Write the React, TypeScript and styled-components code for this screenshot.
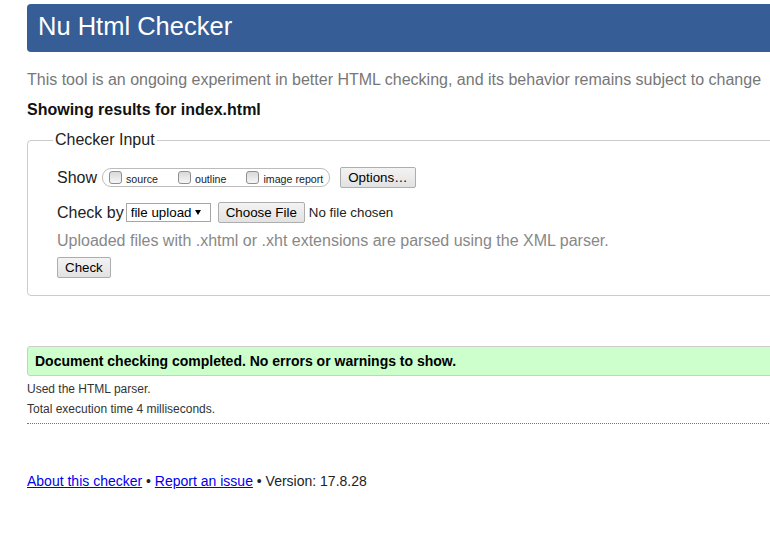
import React from "react";
import styled, { createGlobalStyle } from "styled-components";

const GlobalStyle = createGlobalStyle`
  html, body {
    margin: 0;
    padding: 0;
    overflow: hidden;
    background: #fff;
  }
  body {
    font-family: "Liberation Sans", Arial, sans-serif;
    color: #222;
  }
`;

const Page = styled.div`
  width: 820px;
  padding: 4px 0 0 27px;
`;

const Header = styled.h1`
  margin: 0;
  height: 48px;
  box-sizing: border-box;
  display: flex;
  align-items: center;
  padding: 0 0 2px 11px;
  background: #365d95;
  border-radius: 4px;
  color: #fff;
  font-size: 25.5px;
  font-weight: normal;
  line-height: 1;
`;

const Intro = styled.p`
  margin: 18px 0 0;
  font-size: 16px;
  line-height: 20px;
  color: #777;
`;

const ResultsFor = styled.p`
  margin: 10px 0 0;
  font-size: 16px;
  line-height: 20px;
  font-weight: bold;
  color: #111;
`;

const Fieldset = styled.fieldset`
  margin: 11px 0 0;
  padding: 0 29px 17px;
  border: 1px solid #ccc;
  border-radius: 4px;
  min-width: 0;
`;

const Legend = styled.legend`
  margin-left: -4px;
  padding: 0 2px;
  font-size: 16px;
  color: #222;
`;

const Row = styled.div<{ $mt: number }>`
  display: flex;
  align-items: center;
  height: 21px;
  margin-top: ${(p) => p.$mt}px;
  font-size: 16px;
`;

const RowLabel = styled.span<{ $gap: number }>`
  margin-right: ${(p) => p.$gap}px;
  color: #222;
`;

const ShowGroup = styled.span`
  display: inline-flex;
  align-items: center;
  gap: 20px;
  height: 19px;
  box-sizing: border-box;
  padding: 0 6px;
  border: 1px solid #bcbcbc;
  border-radius: 9px;
`;

const CheckLabel = styled.label`
  display: inline-flex;
  align-items: center;
  gap: 4px;
  font-size: 10.67px;
  color: #222;
`;

const CheckText = styled.span`
  position: relative;
  top: 1px;
`;

const Box = styled.input.attrs({ type: "checkbox" })`
  appearance: none;
  margin: 0;
  width: 13px;
  height: 13px;
  box-sizing: border-box;
  border: 1px solid #8f8f8f;
  border-radius: 3px;
  background: linear-gradient(#d9d9d9, #f6f6f6);
`;

const Button = styled.button<{ $ml?: number }>`
  margin-left: ${(p) => p.$ml ?? 0}px;
  height: 21px;
  padding: 0 7px;
  box-sizing: border-box;
  border: 1px solid #adadad;
  border-radius: 2px;
  background: linear-gradient(#f3f3f3, #e2e2e2);
  font-family: "Liberation Sans", Arial, sans-serif;
  font-size: 13.333px;
  color: #000;
  line-height: 1;
`;

const SelectWrap = styled.span`
  position: relative;
  display: inline-flex;
`;

const Select = styled.select`
  appearance: none;
  width: 85px;
  height: 19px;
  box-sizing: border-box;
  border: 1px solid #a6a6a6;
  border-radius: 0;
  background: #fff;
  padding: 0 0 0 4px;
  font-family: "Liberation Sans", Arial, sans-serif;
  font-size: 13.333px;
  color: #000;
`;

const Arrow = styled.span`
  position: absolute;
  right: 10px;
  top: 7px;
  width: 0;
  height: 0;
  border-left: 3px solid transparent;
  border-right: 3px solid transparent;
  border-top: 5px solid #000;
  pointer-events: none;
`;

const FileStatus = styled.span`
  margin-left: 4px;
  font-size: 13.333px;
  color: #222;
`;

const Help = styled.p`
  margin: 8px 0 0;
  font-size: 16px;
  line-height: 20px;
  color: #888;
`;

const Success = styled.div`
  margin-top: 50px;
  height: 30px;
  box-sizing: border-box;
  display: flex;
  align-items: center;
  padding-left: 7px;
  background: #ccffcc;
  border: 1px solid #ccc;
  border-radius: 3px;
  font-size: 14px;
  font-weight: bold;
  color: #000;
`;

const Meta = styled.p<{ $mt: number }>`
  margin: ${(p) => p.$mt}px 0 0;
  font-size: 12px;
  line-height: 20px;
  color: #333;
`;

const Divider = styled.hr`
  margin: 4px 0 0;
  border: 0;
  border-top: 1px dotted #777;
  height: 0;
`;

const Footer = styled.p`
  margin: 47px 0 0;
  font-size: 14px;
  line-height: 20px;
  color: #222;
`;

const Link = styled.a`
  color: #0000ee;
  text-decoration: underline;
`;

export default function App() {
  return (
    <>
      <GlobalStyle />
      <Page>
        <Header>Nu Html Checker</Header>
        <Intro>
          This tool is an ongoing experiment in better HTML checking, and its behavior remains subject to change
        </Intro>
        <ResultsFor>Showing results for index.html</ResultsFor>
        <Fieldset>
          <Legend>Checker Input</Legend>
          <Row $mt={18}>
            <RowLabel $gap={5}>Show</RowLabel>
            <ShowGroup>
              <CheckLabel>
                <Box />
                <CheckText>source</CheckText>
              </CheckLabel>
              <CheckLabel>
                <Box />
                <CheckText>outline</CheckText>
              </CheckLabel>
              <CheckLabel>
                <Box />
                <CheckText>image report</CheckText>
              </CheckLabel>
            </ShowGroup>
            <Button $ml={10}>Options…</Button>
          </Row>
          <Row $mt={14}>
            <RowLabel $gap={2}>Check by</RowLabel>
            <SelectWrap>
              <Select defaultValue="file">
                <option value="address">address</option>
                <option value="file">file upload</option>
                <option value="text">text input</option>
              </Select>
              <Arrow />
            </SelectWrap>
            <Button $ml={7}>Choose File</Button>
            <FileStatus>No file chosen</FileStatus>
          </Row>
          <Help>Uploaded files with .xhtml or .xht extensions are parsed using the XML parser.</Help>
          <Row $mt={6}>
            <Button>Check</Button>
          </Row>
        </Fieldset>
        <Success>Document checking completed. No errors or warnings to show.</Success>
        <Meta $mt={3}>Used the HTML parser.</Meta>
        <Meta $mt={0}>Total execution time 4 milliseconds.</Meta>
        <Divider />
        <Footer>
          <Link href="#">About this checker</Link> • <Link href="#">Report an issue</Link> • Version: 17.8.28
        </Footer>
      </Page>
    </>
  );
}
